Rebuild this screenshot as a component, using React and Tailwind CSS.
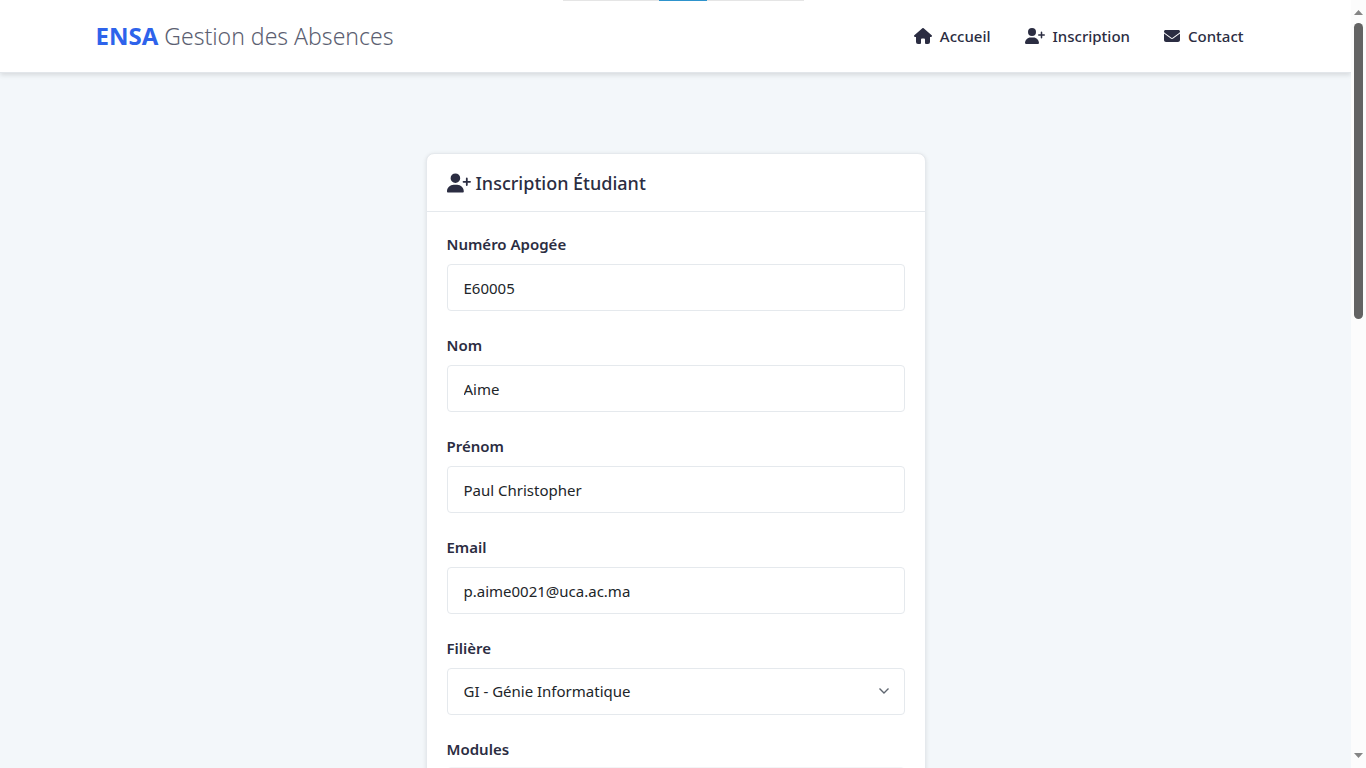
import React from "react";
import { FaUserPlus, FaEnvelope } from "react-icons/fa6";

function HouseIcon() {
  return (
    <svg viewBox="0 0 18 16" className="h-4 w-[18px]" fill="currentColor" aria-hidden="true">
      <path d="M9.65.25a1 1 0 0 0-1.3 0L.34 7.25A1 1 0 0 0 1 9h1v5a2 2 0 0 0 2 2h2a1 1 0 0 0 1-1v-3.500a1 1 0 0 1 1-1h2a1 1 0 0 1 1 1V15a1 1 0 0 0 1 1h2a2 2 0 0 0 2-2V9h1a1 1 0 0 0 .66-1.750z" />
    </svg>
  );
}

function NavLink({ icon, children }) {
  return (
    <a href="#" className="flex items-center gap-2 text-[15px] font-medium">
      {icon}
      <span>{children}</span>
    </a>
  );
}

const labelClass = "block text-[15px] leading-6 font-semibold";
const controlClass =
  "block h-[47px] w-full rounded border border-[#e5e9ed] bg-white px-4 text-[15px] text-[#212529] outline-none focus:border-[#2e63eb]";

function Field({ id, label, value, type = "text" }) {
  return (
    <div className="flex flex-col gap-2">
      <label htmlFor={id} className={labelClass}>{label}</label>
      <input id={id} type={type} defaultValue={value} className={controlClass} />
    </div>
  );
}

function ScrollTrack() {
  return (
    <div className="flex w-[15px] shrink-0 flex-col items-center bg-[#fcfcfc] py-[10px]" aria-hidden="true">
      <svg viewBox="0 0 9 5" className="h-[5px] w-[9px] shrink-0" fill="#858585"><path d="M0 5L4.500 0L9 5Z" /></svg>
      <div className="flex w-full grow justify-center py-2">
        <div className="h-[41%] w-[9px] rounded-full bg-[#636363]" />
      </div>
      <svg viewBox="0 0 9 5" className="h-[5px] w-[9px] shrink-0" fill="#858585"><path d="M0 0L4.500 5L9 0Z" /></svg>
    </div>
  );
}

export default function App() {
  return (
    <div className="relative flex h-screen bg-[#f3f7fa] font-['Noto_Sans','Open_Sans',sans-serif] text-[#2b2d42]">
      <div className="min-w-0 grow overflow-y-auto [scrollbar-width:none]">
        <header className="border-b border-[#e2e6ea] bg-white shadow-[0_2px_5px_rgba(0,0,0,0.12)]">
          <div className="mx-auto flex h-[72px] max-w-[1160px] items-center justify-between pr-3">
            <a href="#" className="flex items-baseline gap-1.5 text-2xl text-[#5c5f72]">
              <strong className="font-bold text-[#2e63eb]">ENSA</strong>
              <span className="text-[23px] font-[350]">Gestion des Absences</span>
            </a>
            <nav className="flex items-center gap-[34px]">
              <NavLink icon={<HouseIcon />}>Accueil</NavLink>
              <NavLink icon={<FaUserPlus className="h-4 w-5" />}>Inscription</NavLink>
              <NavLink icon={<FaEnvelope className="size-4" />}>Contact</NavLink>
            </nav>
          </div>
        </header>

        <main className="px-4 py-20">
          <section className="mx-auto max-w-[500px] rounded-lg border border-[#e5e9ed] bg-white shadow-[0_1px_4px_rgba(0,0,0,0.1)]">
            <h1 className="flex h-[58px] items-center gap-[5px] border-b border-[#e5e9ed] px-5 text-lg font-medium">
              <FaUserPlus className="h-5 w-6" />
              Inscription Étudiant
            </h1>
            <form className="flex flex-col gap-[22px] p-5">
              <Field id="apogee" label="Numéro Apogée" value="E60005" />
              <Field id="nom" label="Nom" value="Aime" />
              <Field id="prenom" label="Prénom" value="Paul Christopher" />
              <Field id="email" label="Email" type="email" value="p.aime0021@uca.ac.ma" />
              <div className="flex flex-col gap-2">
                <label htmlFor="filiere" className={labelClass}>Filière</label>
                <div className="relative">
                  <select id="filiere" className={controlClass + " appearance-none"}>
                    <option>GI - Génie Informatique</option>
                  </select>
                  <svg viewBox="0 0 10 6" className="pointer-events-none absolute top-5 right-4 h-1.5 w-2.5" fill="none" stroke="#5f6670" strokeWidth="1.4" aria-hidden="true">
                    <path d="M.5.5L5 5L9.500.5" />
                  </svg>
                </div>
              </div>
              <div className="flex flex-col gap-1.5">
                <label htmlFor="modules" className={labelClass}>Modules</label>
                <select id="modules" multiple className="block h-32 w-full rounded border border-[#f3f4f6] bg-[#fcfcfd]" />
              </div>
            </form>
          </section>
        </main>
      </div>
      <ScrollTrack />
      <div className="absolute inset-x-0 top-0 mx-auto flex h-px w-[241px] justify-center bg-[#e5e5e5]">
        <div className="h-px w-12 bg-[#2e93cc]" />
      </div>
    </div>
  );
}
